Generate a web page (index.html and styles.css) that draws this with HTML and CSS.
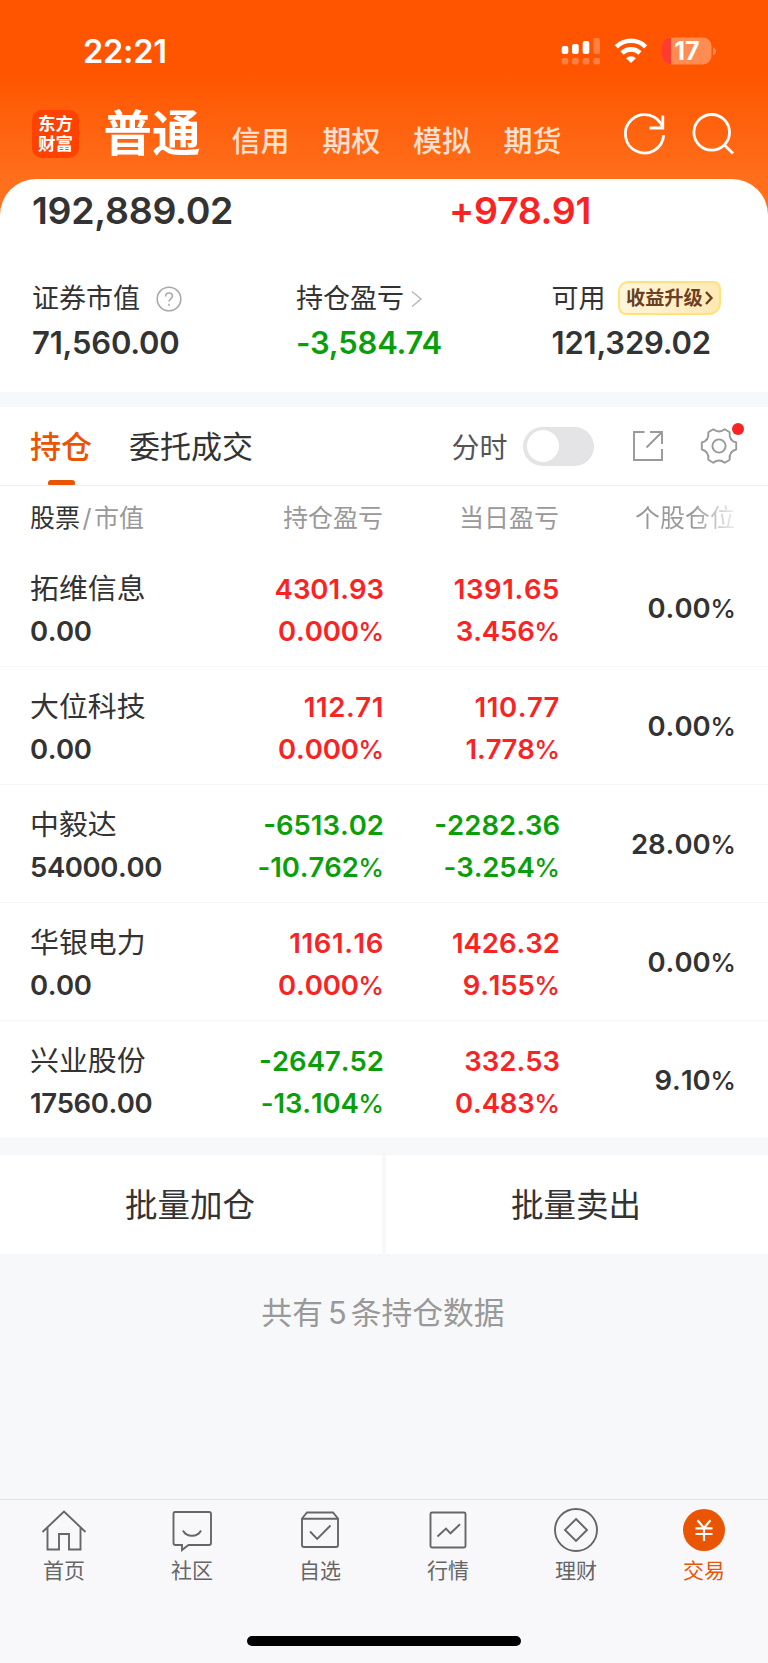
FILE: index.html
```html
<!DOCTYPE html>
<html lang="zh-CN">
<head>
<meta charset="utf-8">
<title>交易 - 持仓</title>
<link rel="stylesheet" href="styles.css">
</head>
<body>
<div class="app">
  <header class="top">
    <div class="status">
      <span class="clock">22:21</span>
      <svg class="status-icons" width="156" height="30" viewBox="0 0 156 30" fill="#fff">
        <rect x="1.7" y="10" width="6.6" height="8" rx="2"/><rect x="12" y="8" width="6.7" height="10" rx="2"/><rect x="22.7" y="5" width="6.6" height="13" rx="2"/>
        <g opacity=".25"><rect x="33.3" y="2" width="6.7" height="16" rx="2"/><rect x="1.7" y="22" width="6.6" height="6.5" rx="2"/><rect x="12" y="22" width="6.7" height="6.5" rx="2"/><rect x="22.7" y="22" width="6.6" height="6.5" rx="2"/><rect x="33.3" y="22" width="6.7" height="6.5" rx="2"/></g>
        <g fill="none" stroke="#fff" stroke-width="4.6"><path d="M56.3 10.8a21 21 0 0 1 29.4 0"/><path d="M62 17a13 13 0 0 1 18 0"/></g>
        <path d="M71 27l-4.9-4.8a7 7 0 0 1 9.8 0z"/>
        <clipPath id="bat"><rect x="102" y="1.5" width="49.5" height="27" rx="8.5"/></clipPath>
        <g clip-path="url(#bat)"><path fill="#ff8c52" d="M102 0h50v30h-50z"/><path fill="#ff3b30" d="M102 0h9v30h-9z"/></g>
        <path fill="#ff8c52" d="M153 11.300c4 1.500 4 6.500 0 8z"/>
        <text class="bat-text" x="127" y="24" text-anchor="middle">17</text>
      </svg>
    </div>
    <nav class="markets">
      <div class="logo"><span>东方</span><span>财富</span></div>
      <b class="market-on">普通</b>
      <span class="market">信用</span><span class="market">期权</span><span class="market">模拟</span><span class="market">期货</span>
      <svg class="top-icons" width="114" height="48" viewBox="0 0 114 48" fill="none" stroke="#fff" stroke-width="2.800">
        <path d="M43.700 25.200A19.200 19.200 0 1 1 42.500 17"/><path d="M42.800 5.500v12.500H29.500"/>
        <circle cx="91.700" cy="22.300" r="17.800"/><path d="M104.400 35l8.600 8.600"/>
      </svg>
    </nav>
  </header>

  <main>
    <section class="summary">
      <div class="totals"><span class="total">192,889.02</span><span class="total up">+978.91</span></div>
      <div class="stats">
        <div class="stat"><div class="label">证券市值<svg class="help" width="26" height="26" viewBox="0 0 26 26" fill="none" stroke="#aaa" stroke-width="1.600"><circle cx="13" cy="13" r="11.800"/><path d="M9.600 10.400c0-4.600 6.800-4.500 6.800-.3 0 2.600-3.400 2.900-3.400 5.500"/><path d="M13 17.700v2"/></svg></div><div class="value">71,560.00</div></div>
        <div class="stat"><div class="label">持仓盈亏<svg class="more" width="12" height="18" viewBox="0 0 12 18" fill="none" stroke="#bbb" stroke-width="1.600"><path d="M1 1.500L10 9l-9 7.500"/></svg></div><div class="value down">-3,584.74</div></div>
        <div class="stat"><div class="label">可用<span class="badge">收益升级<svg width="9" height="14" viewBox="0 0 9 14" fill="none" stroke="#6b3f22" stroke-width="2.400"><path d="M1 1l5.500 6L1 13"/></svg></span></div><div class="value">121,329.02</div></div>
      </div>
    </section>

    <section class="holdings">
      <div class="tabs">
        <span class="tab tab-on">持仓</span><span class="tab">委托成交</span>
        <span class="mode">分时</span><span class="switch"></span>
        <svg class="export" width="32" height="32" viewBox="0 0 32 32" fill="none" stroke="#999" stroke-width="1.900"><path d="M12.500 2H2v28h28V19"/><path d="M18 2h12v12M30 2L14.500 17.500"/></svg>
        <span class="gear"><svg width="38" height="38" viewBox="0 0 38 38" fill="none" stroke="#999" stroke-width="1.900" stroke-linejoin="round"><path d="M13.300 2.300Q19 6.700 24.700 2.300L29.700 5.300Q28.700 13.500 36.200 15.500V22.500Q28.700 24.500 29.700 32.700L24.700 35.700Q19 31.300 13.300 35.700L8.300 32.700Q9.300 24.500 1.800 22.500V15.500Q9.300 13.500 8.300 5.300Z"/><circle cx="19" cy="19" r="6.600"/></svg></span>
      </div>
      <div class="row head"><span class="name"><b>股票</b><i>/</i>市值</span><span class="num">持仓盈亏</span><span class="num">当日盈亏</span><span class="num fade">个股仓位</span></div>

      <div class="row"><div class="name">拓维信息<span>0.00</span></div><div class="num up">4301.93<span>0.000<i>%</i></span></div><div class="num up loose">1391.65<span>3.456<i>%</i></span></div><div class="num share">0.00<i>%</i></div></div>
      <div class="row"><div class="name">大位科技<span>0.00</span></div><div class="num up loose">112.71<span>0.000<i>%</i></span></div><div class="num up loose">110.77<span>1.778<i>%</i></span></div><div class="num share">0.00<i>%</i></div></div>
      <div class="row"><div class="name">中毅达<span>54000.00</span></div><div class="num down">-6513.02<span>-10.762<i>%</i></span></div><div class="num down">-2282.36<span>-3.254<i>%</i></span></div><div class="num share">28.00<i>%</i></div></div>
      <div class="row"><div class="name">华银电力<span>0.00</span></div><div class="num up loose">1161.16<span>0.000<i>%</i></span></div><div class="num up">1426.32<span>9.155<i>%</i></span></div><div class="num share">0.00<i>%</i></div></div>
      <div class="row"><div class="name">兴业股份<span>17560.00</span></div><div class="num down">-2647.52<span>-13.104<i>%</i></span></div><div class="num up">332.53<span>0.483<i>%</i></span></div><div class="num share">9.10<i>%</i></div></div>
    </section>

    <div class="batch"><span>批量加仓</span><span>批量卖出</span></div>
    <p class="count">共有<span>5</span>条持仓数据</p>
  </main>

  <footer class="bottom">
    <nav class="dock">
      <a><svg width="46" height="46" viewBox="0 0 46 46"><path d="M1.500 24L23 3.500 44.500 24M6.500 20v21.500H18V26h10v15.500h11.500V20"/></svg>首页</a>
      <a><svg width="46" height="46" viewBox="0 0 46 46"><path d="M6 4h34q2 0 2 2v29q0 2-2 2H19.500L13 42v-5H6.500q-2 0-2-2V6q0-2 1.500-2z"/><path d="M14 22.500c3.500 7 14.500 7 18 0"/></svg>社区</a>
      <a><svg width="46" height="46" viewBox="0 0 46 46"><path d="M5 10.500L10 4.500h26l5 6V37q0 2-2 2H7q-2 0-2-2zM5 10.800h36"/><path d="M13 23.500l7.200 7.300L33.500 17.500"/></svg>自选</a>
      <a><svg width="46" height="46" viewBox="0 0 46 46"><rect x="5.500" y="4.500" width="35" height="35" rx="1.500"/><path d="M12.500 28.500l8.500-8 4.500 4.800 9.500-9"/></svg>行情</a>
      <a><svg width="46" height="46" viewBox="0 0 46 46"><circle cx="23" cy="22" r="21"/><path d="M23 11l11 11-11 11-11-11z"/></svg>理财</a>
      <a class="dock-on"><svg width="46" height="46" viewBox="0 0 46 46"><circle class="disc" cx="23" cy="22" r="21"/><path d="M16.500 12.300L23 20l6.500-7.700M23 20v13M14.500 20.300h17M14.500 26h17"/></svg>交易</a>
    </nav>
    <div class="home-bar"></div>
  </footer>
</div>
</body>
</html>
```
FILE: styles.css
```css
* { box-sizing: border-box; }
body { margin: 0; background: #f7f8fa; }
i { font-style: normal; }
svg { display: block; flex: none; }

.app {
  display: flex;
  flex-direction: column;
  width: 768px;
  height: 1663px;
  overflow: hidden;
  color: #333;
  font-family: "Inter", "Noto Sans CJK SC", sans-serif;
  background: #f7f8fa;
}

/* header */
.top {
  flex: none;
  height: 220px;
  background: linear-gradient(#ff5500 0, #ff5500 72px, #ff6f1c 180px, #ff6f1c 100%);
}
.status { display: flex; justify-content: space-between; height: 102px; padding: 36px 52px 0 83px; }
.clock { height: 30px; font-size: 32.500px; font-weight: 580; line-height: 31px; letter-spacing: -.2px; color: #fff; }
.bat-text { font-size: 25px; font-weight: 700; }
.markets { display: flex; align-items: flex-start; padding-left: 32px; color: #fff; }
.logo {
  display: flex;
  flex-direction: column;
  align-items: center;
  width: 47px;
  height: 48px;
  margin-top: 8px;
  padding-top: 3.500px;
  border-radius: 10px;
  background: #ff4200;
  font-size: 17.500px;
  font-weight: 700;
  line-height: 20px;
}
.market-on { margin: 1px 31px 0 24.500px; font-size: 48.500px; font-weight: 700; line-height: 62px; }
.market { width: 58px; margin: 22px 32.700px 0 0; font-size: 29px; font-weight: 500; line-height: 36px; color: #ffe0d0; }
.top-icons { margin: 7.500px 0 0 25.300px; }

/* account summary */
.summary {
  height: 212.500px;
  margin-top: -41px;
  padding: 13px 0 0 32px;
  border-radius: 36px 36px 0 0;
  background: #fff;
}
main { flex: 1; }
.totals { display: flex; height: 86px; font-size: 37.500px; font-weight: 580; line-height: 37px; letter-spacing: -.3px; }
.total { flex: none; width: 417px; }
.total + .total { width: auto; }
.stats { display: grid; grid-template-columns: 264px 255.500px 1fr; }
.label { display: flex; align-items: center; height: 42px; font-size: 27px; line-height: 42px; }
.help { margin-left: 16px; }
.more { margin-left: 7px; }
.value { height: 46px; font-size: 31px; font-weight: 580; line-height: 46px; letter-spacing: -.2px; }
.badge {
  display: flex;
  align-items: center;
  gap: 2px;
  width: 103px;
  height: 34px;
  margin: -3px 0 0 12.500px;
  padding-left: 6px;
  border: 2px solid #ffe27a;
  border-radius: 10px 8px 12px 8px;
  background: linear-gradient(100deg, #fff6dc, #ffe9b4);
  color: #6b3f22;
  font-size: 19.200px;
  font-weight: 700;
  white-space: nowrap;
}
.up { color: #fa2323; }
.down { color: #0a9f0a; }

/* holdings */
.holdings { margin-top: 15.500px; background: #fff; }
.tabs { display: flex; align-items: center; height: 79px; padding-left: 30px; border-bottom: 1px solid #eef0f2; }
.tab { display: flex; position: relative; height: 79px; margin-right: 37px; font-size: 31px; line-height: 79px; }
.tab-on { color: #ea5504; font-weight: 500; }
.tab-on::after {
  content: "";
  position: absolute;
  left: 17.500px;
  bottom: .4px;
  width: 27.500px;
  height: 5.500px;
  border-radius: 3px 3px 1px 1px;
  background: #ea5504;
}
.mode { margin-left: 161.500px; font-size: 28px; color: #555; }
.switch { width: 71px; height: 39px; margin-left: 15.500px; padding: 3.500px; border-radius: 20px; background: #e4e4e6; }
.switch::before { content: ""; display: block; width: 32px; height: 32px; border-radius: 50%; background: #fff; }
.export { margin-left: 37.500px; }
.gear { position: relative; margin-left: 36px; }
.gear::after {
  content: "";
  position: absolute;
  top: -4.500px;
  right: -6.500px;
  width: 12px;
  height: 12px;
  border-radius: 50%;
  background: #fa2323;
}

.row {
  display: grid;
  grid-template-columns: 200px 154px 176px 176px;
  height: 118.100px;
  padding: 19px 0 0 30px;
  border-bottom: 1.500px solid #f6f6f7;
  font-size: 27.500px;
  font-weight: 580;
  font-kerning: none;
  line-height: 42.500px;
}
.name { font-size: 28.900px; font-weight: 400; }
.name span, .num span { display: block; margin-top: -.5px; font-size: 27.500px; font-weight: 580; }
.name span { letter-spacing: -.4px; }
.num { text-align: right; }
.num span { letter-spacing: -.1px; }
.loose { letter-spacing: .6px; }
.num i { margin-left: -.5px; font-size: 26px; font-weight: 450; }
.share { padding-top: 19px; }
.head { height: 63px; padding: 11px 0 0 29px; border: 0; font-size: 25px; font-weight: 400; line-height: 42px; color: #999; }
.head .name { padding-left: 1px; font-size: 25px; }
.head b { font-weight: 400; color: #333; }
.head .name i { margin: 0 2.500px; }
.fade {
  color: transparent;
  background: linear-gradient(90deg, #999 76%, #eee 100%);
  background-clip: text;
}

/* batch actions */
.batch { display: flex; gap: 4px; height: 98.500px; margin-top: 16px; font-size: 32.500px; line-height: 101px; text-align: center; }
.batch span { flex: 1; padding-right: 2px; background: #fff; }
.count { margin: 36px 0 0; padding-right: 2px; font-size: 30.800px; line-height: 46px; text-align: center; color: #999; }
.count span { margin: 0 4px 0 5px; }

/* bottom navigation */
.bottom { height: 164.500px; border-top: 1px solid #e2e2e5; background: #f8f8fb; }
.dock { display: flex; height: 136px; padding-top: 8px; }
.dock a { display: flex; flex-direction: column; align-items: center; width: 128px; font-size: 21px; line-height: 34px; color: #666; }
.dock svg { fill: none; stroke: #666; stroke-width: 1.900; }
.dock .dock-on { color: #ea5504; }
.dock-on svg { stroke: #fff; stroke-width: 2.200; }
.disc { fill: #ea5504; stroke: none; }
.home-bar { width: 274px; height: 10px; margin: 0 auto; border-radius: 5px; background: #000; }
```
